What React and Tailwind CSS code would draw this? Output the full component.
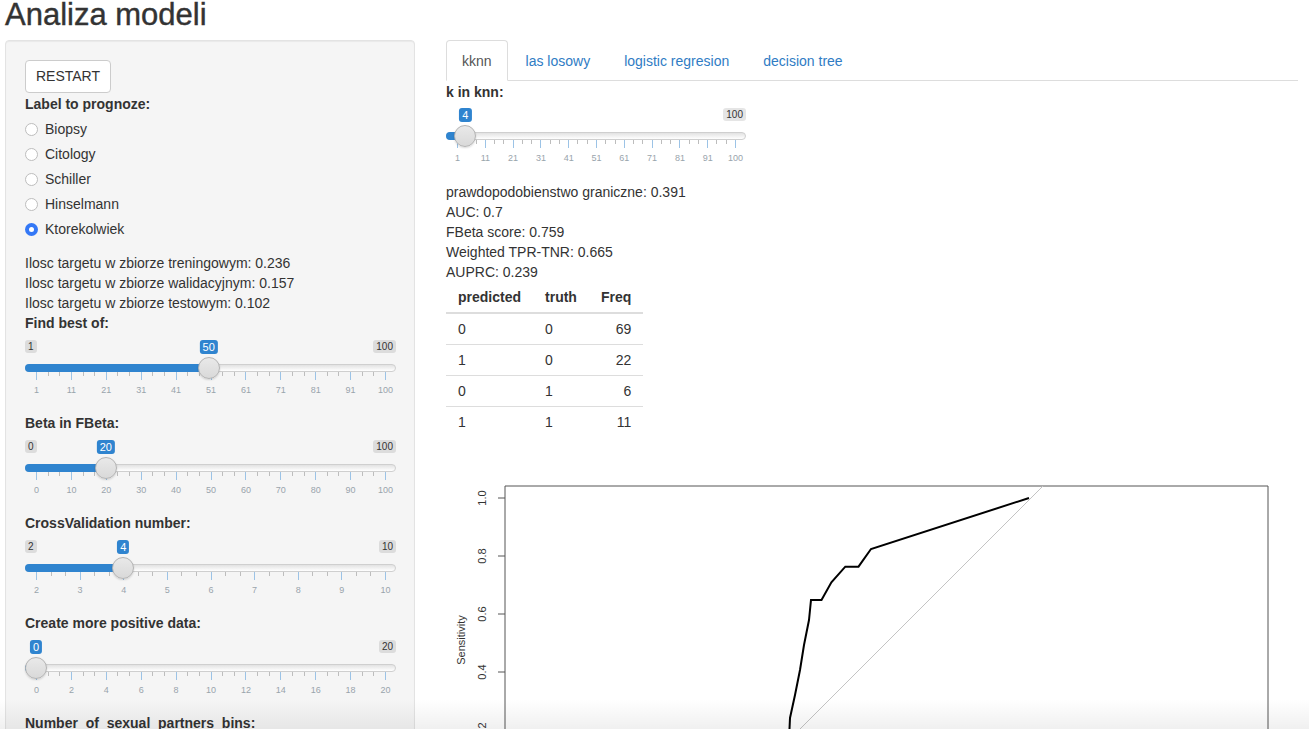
import { Fragment } from "react";

const Slider = ({ min, max, value, labels, width, hideMin }) => {
  const inner = width - 22;
  const pos = (v) => 11 + ((v - min) / (max - min)) * inner;
  const x = pos(value);
  const n = labels.length - 1;
  const minor = [];
  for (let i = 0; i < n; i++) {
    for (let j = 1; j < 3; j++) minor.push(11 + ((i + j / 3) / n) * inner);
  }
  return (
    <div className="relative h-[73px]" style={{ width }}>
      {!hideMin && (
        <span className="absolute left-0 top-0 rounded-[3px] bg-black/10 px-[3px] text-[10px] leading-[13px] text-[#333]">
          {min}
        </span>
      )}
      <span className="absolute right-0 top-0 rounded-[3px] bg-black/10 px-[3px] text-[10px] leading-[13px] text-[#333]">
        {max}
      </span>
      <span
        className="absolute top-0 -translate-x-1/2 rounded-[3px] bg-[#2f84cf] px-[3px] text-[11px] leading-[14px] text-white"
        style={{ left: x }}
      >
        {value}
      </span>
      <div className="absolute left-0 right-0 top-[24px] h-[8px] rounded-full border border-[#cfcfcf] bg-linear-to-b from-[#e2e2e2] to-white" />
      <div
        className="absolute left-0 top-[24px] h-[8px] rounded-l-full bg-[#2f84cf]"
        style={{ width: x }}
      />
      {minor.map((tx, i) => (
        <div
          key={"m" + i}
          className="absolute top-[32px] h-[4px] w-px bg-[#bdbdbd]"
          style={{ left: tx }}
        />
      ))}
      {labels.map((l, i) => {
        const tx = 11 + (i / n) * inner;
        return (
          <Fragment key={i}>
            <div
              className="absolute top-[32px] h-[8px] w-px bg-[#9cc3e6]"
              style={{ left: tx }}
            />
            <span
              className="absolute top-[45px] -translate-x-1/2 whitespace-nowrap text-[9px] leading-[10px] text-[#99a4ac]"
              style={{ left: tx + 0.5 }}
            >
              {l}
            </span>
          </Fragment>
        );
      })}
      <div
        className="absolute top-[17px] size-[22px] rounded-full border border-[#b3b3b3] bg-linear-to-b from-[#e9e9e9] to-[#d9d9d9] shadow-[0_1px_2px_rgba(0,0,0,0.15)]"
        style={{ left: x - 11 }}
      />
    </div>
  );
};

const Radio = ({ label, checked }) => (
  <div className="flex h-[25px] items-center gap-[7px]">
    {checked ? (
      <span className="flex size-[13px] items-center justify-center rounded-full bg-[#3478f6]">
        <span className="size-[5px] rounded-full bg-white" />
      </span>
    ) : (
      <span className="size-[13px] rounded-full border border-[#bdbdbd] bg-white" />
    )}
    <span>{label}</span>
  </div>
);

const SliderGroup = ({ label, ...rest }) => (
  <div>
    <div className="font-bold leading-[20px]">{label}</div>
    <div className="mt-[7px]">
      <Slider width={371} {...rest} />
    </div>
  </div>
);

const range = (a, b, s) => {
  const out = [];
  for (let v = a; v <= b; v += s) out.push(v);
  return out;
};

const rows = [
  [0, 0, 69],
  [1, 0, 22],
  [0, 1, 6],
  [1, 1, 11],
];

const RocPlot = () => {
  const ticks = [
    [498, "1.0"],
    [556, "0.8"],
    [614, "0.6"],
    [672, "0.4"],
    [730, "0.2"],
  ];
  const curve =
    "1029,498 871,549 858.5,566.7 845.3,566.7 831.4,582.3 821.5,600 811,600 809,620 804,645 800,670 795,695 790,718 789,740";
  return (
    <svg width="852" height="283" className="mt-[9px] block">
      <g transform="translate(-446,-446)">
        <polyline
          points="505,760 505,486 1268,486 1268,760"
          fill="none"
          stroke="#555"
          strokeWidth="1"
        />
        <line x1="1043" y1="486" x2="780" y2="749" stroke="#c4c4c4" strokeWidth="1" />
        <polyline points={curve} fill="none" stroke="#000" strokeWidth="2" />
        {ticks.map(([y, t]) => (
          <Fragment key={t}>
            <line x1="498" y1={y} x2="505" y2={y} stroke="#555" strokeWidth="1" />
            <text
              x="483"
              y={y}
              transform={`rotate(-90 483 ${y})`}
              textAnchor="middle"
              dominantBaseline="middle"
              fontSize="11"
              fill="#333"
            >
              {t}
            </text>
          </Fragment>
        ))}
        <text
          x="462"
          y="640"
          transform="rotate(-90 462 640)"
          textAnchor="middle"
          dominantBaseline="middle"
          fontSize="11"
          fill="#333"
        >
          Sensitivity
        </text>
      </g>
    </svg>
  );
};

const App = () => {
  return (
    <div className="relative h-[729px] overflow-hidden bg-white px-[5px] font-['Liberation_Sans',Arial,sans-serif] text-[14px] text-[#333]">
      <div className="h-[40px] pt-px">
        <h2 className="-mt-[2px] text-[31px] leading-[32px] [-webkit-text-stroke:0.4px_#333]">
          Analiza modeli
        </h2>
      </div>
      <div className="flex gap-[31px]">
        <div className="h-[800px] w-[410px] shrink-0 rounded border border-[#e3e3e3] bg-[#f5f5f5] pl-[19px] pr-[18px] pt-[19px] shadow-[inset_0_1px_1px_rgba(0,0,0,0.05)]">
          <button className="h-[33px] w-[86px] rounded border border-[#ccc] bg-white text-[14px] text-[#333]">
            RESTART
          </button>
          <div className="mt-[1px] font-bold leading-[20px]">Label to prognoze:</div>
          <div className="mt-[3px]">
            <Radio label="Biopsy" />
            <Radio label="Citology" />
            <Radio label="Schiller" />
            <Radio label="Hinselmann" />
            <Radio label="Ktorekolwiek" checked />
          </div>
          <div className="mt-[11px] leading-[20px]">
            <div>Ilosc targetu w zbiorze treningowym: 0.236</div>
            <div>Ilosc targetu w zbiorze walidacyjnym: 0.157</div>
            <div>Ilosc targetu w zbiorze testowym: 0.102</div>
          </div>
          <SliderGroup
            label="Find best of:"
            min={1}
            max={100}
            value={50}
            labels={[1, 11, 21, 31, 41, 51, 61, 71, 81, 91, 100]}
          />
          <SliderGroup
            label="Beta in FBeta:"
            min={0}
            max={100}
            value={20}
            labels={range(0, 100, 10)}
          />
          <SliderGroup
            label="CrossValidation number:"
            min={2}
            max={10}
            value={4}
            labels={range(2, 10, 1)}
          />
          <SliderGroup
            label="Create more positive data:"
            min={0}
            max={20}
            value={0}
            hideMin
            labels={range(0, 20, 2)}
          />
          <div className="font-bold leading-[20px]">Number_of_sexual_partners_bins:</div>
        </div>

        <div className="w-[852px] shrink-0">
          <div className="flex h-[41px] border-b border-[#ddd]">
            <div className="-mb-px mr-[2px] rounded-t border border-[#ddd] border-b-white bg-white px-[15px] py-[10px] leading-[20px] text-[#555]">
              kknn
            </div>
            <div className="mr-[2px] border border-transparent px-[15px] py-[10px] leading-[20px] text-[#2f7cc4]">
              las losowy
            </div>
            <div className="mr-[2px] border border-transparent px-[15px] py-[10px] leading-[20px] text-[#2f7cc4]">
              logistic regresion
            </div>
            <div className="mr-[2px] border border-transparent px-[15px] py-[10px] leading-[20px] text-[#2f7cc4]">
              decision tree
            </div>
          </div>
          <div className="mt-[1px] font-bold leading-[20px]">k in knn:</div>
          <div className="mt-[6px]">
            <Slider
              width={300}
              min={1}
              max={100}
              value={4}
              hideMin
              labels={[1, 11, 21, 31, 41, 51, 61, 71, 81, 91, 100]}
            />
          </div>
          <div className="pt-px leading-[20px]">
            <div>prawdopodobienstwo graniczne: 0.391</div>
            <div>AUC: 0.7</div>
            <div>FBeta score: 0.759</div>
            <div>Weighted TPR-TNR: 0.665</div>
            <div>AUPRC: 0.239</div>
          </div>
          <table className="border-collapse leading-[20px]">
            <thead>
              <tr className="border-b-2 border-[#ddd]">
                <th className="px-3 py-[5px] text-left">predicted</th>
                <th className="px-3 py-[5px] text-left">truth</th>
                <th className="px-3 py-[5px] text-right">Freq</th>
              </tr>
            </thead>
            <tbody>
              {rows.map((r, i) => (
                <tr key={i} className={i > 0 ? "border-t border-[#ddd]" : ""}>
                  <td className="px-3 py-[5px] text-left">{r[0]}</td>
                  <td className="px-3 py-[5px] text-left">{r[1]}</td>
                  <td className="px-3 py-[5px] text-right">{r[2]}</td>
                </tr>
              ))}
            </tbody>
          </table>
          <RocPlot />
        </div>
      </div>
      <div className="pointer-events-none absolute inset-x-0 bottom-0 h-[30px] bg-linear-to-b from-transparent to-black/[0.06]" />
    </div>
  );
};

export default App;
